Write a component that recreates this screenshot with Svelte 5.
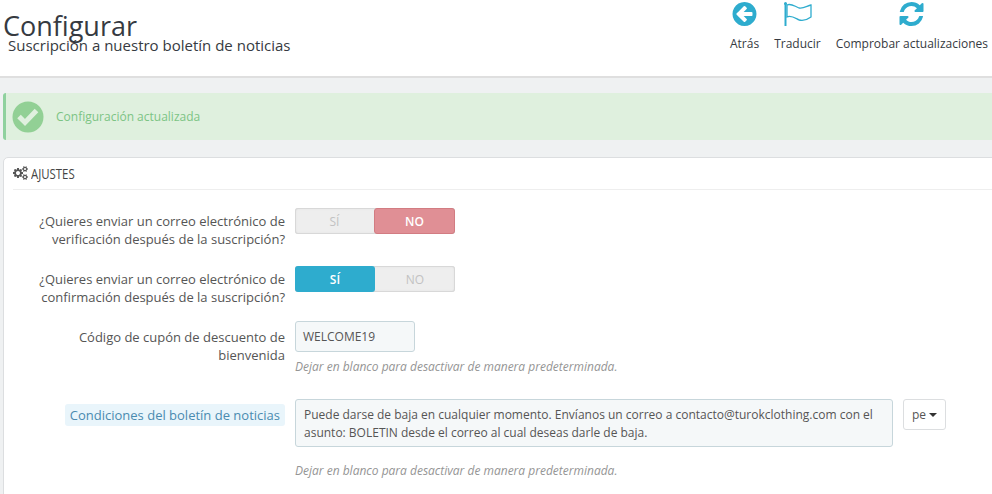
<script>
  const arrow = "M1408 960v-128q0-26-19-45t-45-19h-502l189-189q19-19 19-45t-19-45l-91-91q-18-18-45-18t-45 18l-362 362-91 91q-18 18-18 45t18 45l91 91 362 362q18 18 45 18t45-18l91-91q18-18 18-45t-18-45l-189-189h502q26 0 45-19t19-45zm256-64q0 209-103 385.500t-279.500 279.500-385.500 103-385.500-103-279.500-279.500-103-385.500 103-385.500 279.500-279.500 385.500-103 385.500 103 279.500 279.500 103 385.500z";
  const refresh = "M1639 1056q0 5-1 7-64 268-268 434.500t-478 166.500q-146 0-282.500-55t-243.500-157l-129 129q-19 19-45 19t-45-19-19-45v-448q0-26 19-45t45-19h448q26 0 45 19t19 45-19 45l-137 137q71 66 161 102t187 36q134 0 250-65t186-179q11-17 53-117 8-23 30-23h192q13 0 22.500 9.500t9.500 22.500zm25-800v448q0 26-19 45t-45 19h-448q-26 0-45-19t-19-45 19-45l138-138q-148-137-349-137-134 0-250 65t-186 179q-11 17-53 117-8 23-30 23h-199q-13 0-22.500-9.500t-9.500-22.500v-7q65-268 270-434.500t480-166.500q146 0 284 55.500t245 156.500l130-129q19-19 45-19t45 19 19 45z";
  const cogs = "M896 896q0-106-75-181t-181-75-181 75-75 181 75 181 181 75 181-75 75-181zm768 512q0-52-38-90t-90-38-90 38-38 90q0 53 37.500 90.500t90.500 37.500 90.500-37.500 37.500-90.500zm0-1024q0-52-38-90t-90-38-90 38-38 90q0 53 37.500 90.500t90.500 37.500 90.500-37.500 37.500-90.500zm-384 421v185q0 10-7 19.500t-16 10.500l-155 24q-11 35-32 76 34 48 90 115 7 11 7 20 0 12-7 19-23 30-82.500 89.500t-78.500 59.500q-11 0-21-7l-115-90q-37 19-77 31-11 108-23 155-7 24-30 24h-186q-11 0-20-7.500t-10-17.500l-23-153q-34-10-75-31l-118 89q-7 7-20 7-11 0-21-8-144-133-144-160 0-9 7-19 10-14 41-53t47-61q-23-44-35-82l-152-24q-10-1-17-9.500t-7-19.500v-185q0-10 7-19.500t16-10.500l155-24q11-35 32-76-34-48-90-115-7-10-7-20 0-12 7-20 22-30 82-89t79-59q11 0 21 7l115 90q34-18 77-32 11-108 23-154 7-24 30-24h186q11 0 20 7.500t10 17.500l23 153q34 10 75 31l118-89q8-7 20-7 11 0 21 8 144 133 144 160 0 8-7 19-12 16-42 54t-45 60q23 48 34 82l152 23q10 2 17 10.500t7 19.500zm640 533v140q0 16-149 31-12 27-30 52 51 113 51 138 0 4-4 7-122 71-124 71-8 0-46-47t-52-68q-20 2-30 2t-30-2q-14 21-52 68t-46 47q-2 0-124-71-4-3-4-7 0-25 51-138-18-25-30-52-149-15-149-31v-140q0-16 149-31 13-29 30-52-51-113-51-138 0-4 4-7 4-2 35-20t59-34 30-16q8 0 46 46.500t52 67.500q20-2 30-2t30 2q51-71 92-112l6-2q4 0 124 70 4 3 4 7 0 25-51 138 17 23 30 52 149 15 149 31zm0-1024v140q0 16-149 31-12 27-30 52 51 113 51 138 0 4-4 7-122 71-124 71-8 0-46-47t-52-68q-20 2-30 2t-30-2q-14 21-52 68t-46 47q-2 0-124-71-4-3-4-7 0-25 51-138-18-25-30-52-149-15-149-31v-140q0-16 149-31 13-29 30-52-51-113-51-138 0-4 4-7 4-2 35-20t59-34 30-16q8 0 46 46.500t52 67.500q20-2 30-2t30 2q51-71 92-112l6-2q4 0 124 70 4 3 4 7 0 25-51 138 17 23 30 52 149 15 149 31z";
  const help = "Dejar en blanco para desactivar de manera predeterminada.";
</script>

<div class="page">
  <header class="head">
    <div class="titles">
      <h1>Configurar</h1>
      <h2>Suscripción a nuestro boletín de noticias</h2>
    </div>
    <nav class="tools">
      <div class="tool back">
        <svg width="25" height="24" viewBox="128 128 1536 1536"><path d={arrow} /></svg>
        <span>Atrás</span>
      </div>
      <div class="tool flag">
        <svg width="30" height="24" viewBox="0 0 30 24"><path class="pole" d="M3.500 1v23" /><circle cx="3.500" cy="1.500" r="1.500" /><path class="cloth" d="M5 3C9 1 12 4 17 6C21 7 25 4 29 3V15C25 18 21 19 17 18C13 16 9 13 5 15z" /></svg>
        <span>Traducir</span>
      </div>
      <div class="tool update">
        <svg width="25" height="24" viewBox="128 128 1536 1536"><path d={refresh} /></svg>
        <span>Comprobar actualizaciones</span>
      </div>
    </nav>
  </header>

  <main class="content">
    <div class="alert">
      <svg class="ok" width="32" height="32" viewBox="0 0 32 32"><circle cx="16" cy="16" r="15.500" /><path d="M7 15.500l6 6 11.500-12" /></svg>
      <span>Configuración actualizada</span>
    </div>

    <section class="panel">
      <div class="panel-head">
        <svg width="15" height="14" viewBox="0 0 1920 1792"><path d={cogs} /></svg>
        <span class="cond">AJUSTES</span>
      </div>

      <div class="row r1">
        <div class="label">¿Quieres enviar un correo electrónico de verificación después de la suscripción?</div>
        <div class="switch"><span class="opt">SÍ</span><span class="opt on-no">NO</span></div>
      </div>
      <div class="row r2">
        <div class="label">¿Quieres enviar un correo electrónico de confirmación después de la suscripción?</div>
        <div class="switch"><span class="opt on-yes">SÍ</span><span class="opt">NO</span></div>
      </div>
      <div class="row r3">
        <div class="label">Código de cupón de descuento de bienvenida</div>
        <div class="field">
          <div class="input">WELCOME19</div>
          <p class="help">{help}</p>
        </div>
      </div>
      <div class="row r4">
        <div class="label"><span class="hint">Condiciones del boletín de noticias</span></div>
        <div class="field">
          <div class="multi">
            <div class="textarea">Puede darse de baja en cualquier momento. Envíanos un correo a contacto@turokclothing.com con el asunto: BOLETIN desde el correo al cual deseas darle de baja.</div>
            <div class="lang">pe<i class="caret"></i></div>
          </div>
          <p class="help h2">{help}</p>
        </div>
      </div>
    </section>
  </main>
</div>

<style>
  :global(body) {
    margin: 0;
    background: #eff1f2;
  }
  .page {
    height: 494px;
    overflow: hidden;
    font-family: "Open Sans", sans-serif;
    font-size: 13px;
    color: #555;
  }
  .head {
    height: 76px;
    background: #fff;
    border-bottom: 2px solid #dfdfdf;
    display: flex;
    justify-content: space-between;
  }
  .titles {
    padding: 8px 0 0 3px;
  }
  h1 {
    margin: 0;
    font-size: 27px;
    font-weight: 400;
    line-height: 36px;
    color: #363a41;
  }
  h2 {
    margin: -10px 0 0 5px;
    font-size: 15px;
    font-weight: 400;
    line-height: 22px;
    color: #363a41;
  }
  .tools {
    display: flex;
    gap: 15px;
    padding: 2px 4px 0 0;
  }
  .tool {
    display: flex;
    flex-direction: column;
    align-items: center;
    font-size: 12px;
    color: #363a41;
  }
  .tool svg {
    display: block;
    fill: #2eacce;
  }
  .tool span {
    margin-top: 9px;
    line-height: 17px;
  }
  .cloth {
    fill: none;
    stroke: #2eacce;
    stroke-width: 1.300;
  }
  .pole {
    fill: none;
    stroke: #2eacce;
    stroke-width: 2;
  }
  .content {
    padding: 15px 0 0 3px;
  }
  .alert {
    height: 47px;
    background: #dff0de;
    border-left: 3px solid #8fd19e;
    border-radius: 3px 0 0 3px;
    display: flex;
    align-items: center;
    gap: 12px;
    padding-left: 6px;
    color: #7cc484;
    font-size: 12px;
  }
  .ok circle {
    fill: #92d095;
  }
  .ok path {
    fill: none;
    stroke: #e0f0df;
    stroke-width: 5;
  }
  .panel {
    margin-top: 17px;
    width: 1010px;
    background: #fff;
    border: 1px solid #dcdee0;
    border-radius: 5px;
    height: 400px;
    padding: 0 0 0 9px;
    box-sizing: border-box;
  }
  .panel-head {
    height: 29px;
    padding-bottom: 2px;
    border-bottom: 1px solid #eee;
    display: flex;
    align-items: center;
    gap: 3px;
    color: #444;
  }
  .panel-head svg {
    fill: #555;
  }
  .cond {
    display: inline-block;
    font-size: 15px;
    transform: scaleX(0.76);
    transform-origin: left center;
  }
  .row {
    display: flex;
    gap: 10px;
  }
  .label {
    width: 272px;
    padding-left: 20px;
    box-sizing: border-box;
    text-align: right;
    line-height: 18px;
  }
  .r1 {
    margin-top: 18px;
  }
  .r1 .label, .r2 .label {
    padding-top: 4px;
  }
  .r2 {
    margin-top: 18px;
  }
  .r3 {
    margin-top: 15px;
  }
  .r3 .label {
    padding-top: 7px;
  }
  .r4 {
    margin-top: 23px;
  }
  .r4 .label {
    padding-top: 7px;
  }
  .switch {
    display: flex;
    width: 160px;
    height: 26px;
    background: #eee;
    border-radius: 3px;
    box-shadow: inset 0 0 0 1px #d8d8d8, inset 0 0 2px 1px #e2e2e2;
    font-size: 12px;
    color: #c2c2c2;
  }
  .opt {
    flex: 1;
    display: flex;
    align-items: center;
    justify-content: center;
    border-radius: 3px;
  }
  .on-no {
    background: #e08f95;
    border: 1px solid #d27c82;
    color: #fff;
    font-weight: 600;
  }
  .on-yes {
    background: #2eacce;
    color: #fff;
    font-weight: 600;
  }
  .input {
    width: 120px;
    height: 31px;
    box-sizing: border-box;
    background: #f5f8f9;
    border: 1px solid #c7d6db;
    border-radius: 3px;
    padding: 0 7px;
    font-size: 12px;
    line-height: 29px;
    color: #555;
  }
  .help {
    margin: 6px 0 0;
    font-size: 12px;
    font-style: italic;
    line-height: 18px;
    color: #959595;
  }
  .multi {
    display: flex;
    align-items: flex-start;
    gap: 10px;
  }
  .textarea {
    width: 598px;
    height: 48px;
    box-sizing: border-box;
    background: #f5f8f9;
    border: 1px solid #c7d6db;
    border-radius: 3px;
    padding: 6px 8px;
    font-size: 12px;
    line-height: 18px;
    color: #555;
  }
  .lang {
    width: 43px;
    height: 31px;
    box-sizing: border-box;
    background: #fff;
    border: 1px solid #dcdee0;
    border-radius: 3px;
    display: flex;
    align-items: center;
    justify-content: center;
    gap: 3px;
    font-size: 12px;
  }
  .caret {
    border: 4px solid transparent;
    border-top-color: #333;
    border-bottom: 0;
  }
  .help.h2 {
    margin-top: 15px;
  }
  .hint {
    background: #e9f5fb;
    color: #4a8bb0;
    border-radius: 3px;
    padding: 2px 5px;
  }
</style>
